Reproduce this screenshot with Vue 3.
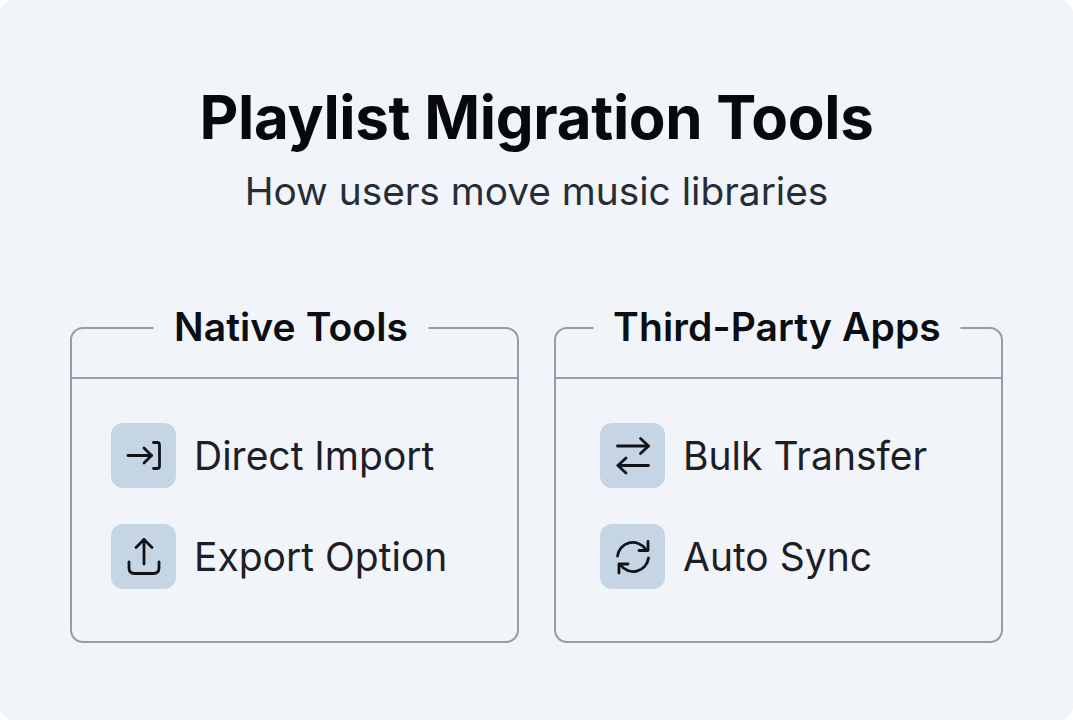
<script setup>
const cards = [
  { title: 'Native Tools', side: 'left', items: [
    { label: 'Direct Import', icon: 'import' },
    { label: 'Export Option', icon: 'export' },
  ]},
  { title: 'Third-Party Apps', side: 'right', items: [
    { label: 'Bulk Transfer', icon: 'swap' },
    { label: 'Auto Sync', icon: 'sync' },
  ]},
];
</script>

<template>
  <main class="page">
    <h1 class="title">Playlist Migration Tools</h1>
    <p class="subtitle">How users move music libraries</p>
    <section class="cards">
      <article v-for="card in cards" :key="card.title" class="card">
        <header class="card-head" :class="card.side">
          <h2 class="card-title">{{ card.title }}</h2>
        </header>
        <ul class="list" :class="card.side">
          <li v-for="item in card.items" :key="item.label" class="row">
            <span class="tile">
              <svg viewBox="0 0 36 36" class="icon" fill="none" stroke="#101318" stroke-width="2.8" stroke-linecap="round" stroke-linejoin="round">
                <template v-if="item.icon === 'import'">
                  <path d="M2 17.500H25.500" />
                  <path d="M18 10L25.500 17.500L18 25" />
                  <path d="M27.500 4.500H31Q33.500 4.500 33.500 7V28Q33.500 30.500 31 30.500H27.500" />
                </template>
                <template v-else-if="item.icon === 'export'">
                  <path d="M18 25V0.500" />
                  <path d="M10 8.500L18 0.500L26 8.500" />
                  <path d="M3 23V29Q3 34.500 8.500 34.500H27.500Q33 34.500 33 29V23" />
                </template>
                <template v-else-if="item.icon === 'swap'">
                  <path d="M2.500 8H33.500" />
                  <path d="M25.500 0.500L33.500 8L25.500 15.500" />
                  <path d="M33.500 27.500H3" />
                  <path d="M11 20L3 27.500L11 35" />
                </template>
                <template v-else>
                  <path d="M2.500 17A15.500 15.500 0 0 1 30.500 10" />
                  <path d="M33 2.500V11.500H24" />
                  <path d="M33.500 19A15.500 15.500 0 0 1 5.500 26" />
                  <path d="M4 34V25H13" />
                </template>
              </svg>
            </span>
            <span class="label">{{ item.label }}</span>
          </li>
        </ul>
      </article>
    </section>
  </main>
</template>

<style>
html, body { margin: 0; background: #fff; }
</style>

<style scoped>
.page {
  box-sizing: border-box;
  width: 1073px;
  height: 720px;
  padding: 81px 70px 0;
  border-radius: 14px;
  background: #f1f4f8;
  font-family: Inter, "Liberation Sans", sans-serif;
  color: #14181d;
  text-align: center;
  overflow: hidden;
}
.title {
  margin: 0;
  font-size: 60px;
  line-height: 72px;
  font-weight: 700;
  letter-spacing: -0.3px;
  color: #08090c;
}
.subtitle {
  margin: 9px 0 0;
  font-size: 38.800px;
  line-height: 58px;
  font-weight: 400;
  color: #272d35;
}
.cards {
  display: flex;
  gap: 35px;
  margin-top: 107px;
}
.card {
  box-sizing: border-box;
  width: 449px;
  height: 316px;
  border: 2px solid #939daa;
  border-radius: 13px;
}
.card-head {
  display: flex;
  justify-content: center;
  height: 48px;
  border-bottom: 2px solid #939daa;
}
.card-title {
  margin: -24px 0 0;
  padding: 0 20px;
  height: 44px;
  background: #f1f4f8;
  font-size: 39px;
  line-height: 44px;
  font-weight: 600;
  letter-spacing: 0.1px;
  color: #0b0e12;
}
.card-head.left .card-title {
  transform: translateX(-3.500px);
}
.card-head.right .card-title {
  transform: translateX(-1.500px);
}
.list {
  display: flex;
  flex-direction: column;
  gap: 36px;
  margin: 0;
  padding: 44px 0 0 39px;
  list-style: none;
}
.list.right {
  padding-left: 44px;
}
.row {
  display: flex;
  align-items: center;
  gap: 18px;
}
.tile {
  display: flex;
  align-items: center;
  justify-content: center;
  width: 65px;
  height: 65px;
  border-radius: 12px;
  background: #c6d5e4;
}
.icon {
  width: 36px;
  height: 36px;
  overflow: visible;
}
.label {
  font-size: 39px;
  line-height: 46px;
  font-weight: 400;
  color: #1c2026;
}
</style>
